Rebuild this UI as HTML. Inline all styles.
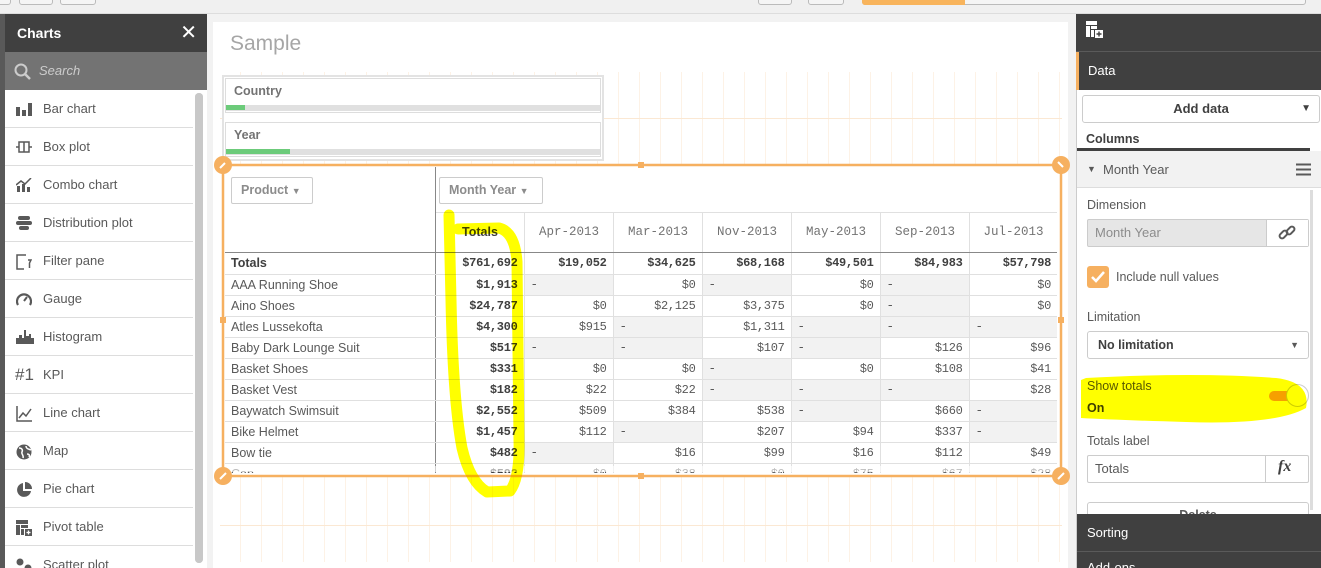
<!DOCTYPE html>
<html style="overflow:hidden;width:1321px;height:568px"><head><meta charset="utf-8">
<style>
*{box-sizing:border-box;margin:0;padding:0}
body{width:1321px;height:568px;overflow:hidden;background:#f2f2f2;font-family:"Liberation Sans",sans-serif;position:relative;color:#595959}
.a{position:absolute}
.topbtn{position:absolute;top:-4px;height:9px;border:1px solid #bbb;border-radius:3px;background:#f5f5f5}
.li{position:absolute;left:5px;width:188px;height:38px;border-bottom:1px solid #ddd;background:#fff;font-size:13px;color:#595959;line-height:38px;padding-left:38px}
.li i{position:absolute;left:11px;top:12px;width:16px;height:14px;font-style:normal;line-height:0;display:block}
.li i svg{display:block}
table{border-collapse:collapse;table-layout:fixed}
td{height:21px;font-size:12.5px;padding:0 6px;border-bottom:1px solid #e0e0e0;border-left:1px solid #e0e0e0;white-space:nowrap;overflow:hidden}
td.n{font-family:"Liberation Mono",monospace;text-align:right;font-size:12px;letter-spacing:-0.3px}
td.g{background:#f2f2f2;text-align:left;font-family:"Liberation Mono",monospace}
td.p{border-left:none;color:#595959}
td.t{font-weight:bold;border-left:1px solid #888;color:#404040}
.lab{font-size:12.5px;color:#595959}
</style></head><body>
<div class="a" style="left:0;top:0;width:1321px;height:14px;background:#f0f0f0;border-bottom:1px solid #ddd"></div>
<div class="topbtn" style="left:-5px;width:16px"></div>
<div class="topbtn" style="left:19px;width:34px"></div>
<div class="topbtn" style="left:60px;width:36px"></div>
<div class="topbtn" style="left:758px;width:34px"></div>
<div class="topbtn" style="left:808px;width:36px"></div>
<div class="topbtn" style="left:862px;width:444px;background:#f5f5f5"></div>
<div class="a" style="left:862px;top:0;width:103px;height:5px;background:#f8b45c;border-radius:0 0 0 3px"></div>

<div class="a" style="left:0;top:14px;width:5px;height:554px;background:#595959"></div>
<div class="a" style="left:5px;top:14px;width:202px;height:38px;background:#404040;color:#fff;font-weight:bold;font-size:14px;line-height:38px;padding-left:12px">Charts<span style="position:absolute;right:10px;font-weight:normal;font-size:20px">✕</span></div>
<div class="a" style="left:5px;top:52px;width:202px;height:38px;background:#737373;color:#ccc;font-style:italic;font-size:13px;line-height:38px;padding-left:34px">Search
<svg class="a" style="left:9px;top:11px" width="18" height="18" viewBox="0 0 18 18"><circle cx="7" cy="7" r="5.5" fill="none" stroke="#ccc" stroke-width="2"/><path d="M11 11l5 5" stroke="#ccc" stroke-width="2.5"/></svg></div>
<div class="a" style="left:5px;top:90px;width:202px;height:478px;background:#fff;overflow:hidden">
<div class="a" style="left:190px;top:3px;width:8px;height:470px;background:#c8c8c8;border-radius:4px"></div>
</div>
<div class="a" style="left:0;top:90px;width:207px;height:478px;overflow:hidden">
<div class="li" style="top:0px"><i><svg width="16" height="14"><rect x="0" y="5" width="4" height="9" fill="#595959"/><rect x="6" y="8" width="4" height="6" fill="#595959"/><rect x="12" y="1" width="4" height="13" fill="#595959"/></svg></i>Bar chart</div>
<div class="li" style="top:38px"><i><svg width="16" height="14"><path d="M0 7h3M13 7h3M3 2h10v10H3zM8 2v10" stroke="#595959" fill="none" stroke-width="1.5"/></svg></i>Box plot</div>
<div class="li" style="top:76px"><i><svg width="16" height="14"><rect x="1" y="8" width="3" height="6" fill="#595959"/><rect x="6" y="6" width="3" height="8" fill="#595959"/><rect x="11" y="9" width="3" height="5" fill="#595959"/><path d="M0 7l5-4 4 3 6-6" stroke="#595959" fill="none" stroke-width="1.5"/></svg></i>Combo chart</div>
<div class="li" style="top:114px"><i><svg width="16" height="14"><rect x="2" y="0" width="12" height="4" rx="2" fill="#595959"/><rect x="0" y="5" width="16" height="4" rx="2" fill="#595959"/><rect x="3" y="10" width="10" height="4" rx="2" fill="#595959"/></svg></i>Distribution plot</div>
<div class="li" style="top:152px"><i><svg width="16" height="16"><path d="M10 1H1v14h7M12 6l3 0-1.5 3v5" stroke="#595959" fill="none" stroke-width="1.5"/></svg></i>Filter pane</div>
<div class="li" style="top:190px"><i><svg width="16" height="14"><path d="M2 13A7 7 0 1 1 14 13" stroke="#595959" fill="none" stroke-width="2.2"/><path d="M8 9l3-4" stroke="#595959" stroke-width="2"/></svg></i>Gauge</div>
<div class="li" style="top:228px"><i><svg width="18" height="14"><path d="M0 14V8h3V5h3v3h2V0h2v6h3V4h2v4h3v6z" fill="#595959"/></svg></i>Histogram</div>
<div class="li" style="top:266px"><i style="top:10px;font-size:17px;line-height:18px;color:#595959;left:10px">#1</i>KPI</div>
<div class="li" style="top:304px"><i><svg width="16" height="16"><path d="M1 0v15h15M3 12l4-5 3 3 5-7" stroke="#595959" fill="none" stroke-width="1.5"/></svg></i>Line chart</div>
<div class="li" style="top:342px"><i><svg width="16" height="16"><circle cx="8" cy="8" r="7.5" fill="#595959"/><path d="M3 4c3 0 4 2 3 4s2 3 1 6M10 2c0 3 3 3 5 4M11 10c2 0 3 1 2 3" stroke="#fff" fill="none" stroke-width="1.5"/></svg></i>Map</div>
<div class="li" style="top:380px"><i><svg width="16" height="16"><path d="M7 1A7 7 0 1 0 15 9H7z" fill="#595959"/><path d="M9 0v7h7A7 7 0 0 0 9 0z" fill="#595959"/></svg></i>Pie chart</div>
<div class="li" style="top:418px"><i><svg width="16" height="16"><path d="M0 0h12v4H0zM0 5h4v10H0zM5 5h7v3H5zM5 9h3v6H5z" fill="#595959"/><rect x="9" y="9" width="7" height="7" fill="#595959"/><path d="M12.5 10.5v4M10.5 12.5h4" stroke="#fff" stroke-width="1.3"/></svg></i>Pivot table</div>
<div class="li" style="top:456px"><i><svg width="16" height="14"><circle cx="4" cy="4" r="3.5" fill="#595959"/><circle cx="12" cy="10" r="3.5" fill="#595959"/></svg></i>Scatter plot</div>
</div>
<div class="a" style="left:195px;top:93px;width:8px;height:470px;background:#c8c8c8;border-radius:4px"></div>

<div class="a" style="left:213px;top:22px;width:855px;height:546px;background:#fff"></div>
<div class="a" style="left:220px;top:72px;width:842px;height:490px;background-image:repeating-linear-gradient(90deg,transparent 0 20px,#fdf2e6 20px 21px)"></div>
<div class="a" style="left:220px;top:118px;width:842px;height:1px;background:#fbe8d3"></div>
<div class="a" style="left:220px;top:525px;width:842px;height:1px;background:#fbe8d3"></div>
<div class="a" style="left:230px;top:32px;font-size:21px;color:#a6a6a6">Sample</div>

<div class="a" style="left:222px;top:75px;width:382px;height:86px;background:#fff;border:2px solid #e3e3e3"></div>
<div class="a" style="left:225px;top:78px;width:376px;height:35px;border:1px solid #ddd;background:#fff"></div>
<div class="a" style="left:234px;top:84px;font-size:12.5px;font-weight:bold;color:#737373">Country</div>
<div class="a" style="left:226px;top:105px;width:374px;height:6px;background:#e0e0e0"></div>
<div class="a" style="left:226px;top:105px;width:19px;height:5px;background:#6ccb7a"></div>
<div class="a" style="left:225px;top:122px;width:376px;height:35px;border:1px solid #ddd;background:#fff"></div>
<div class="a" style="left:234px;top:128px;font-size:12.5px;font-weight:bold;color:#737373">Year</div>
<div class="a" style="left:226px;top:149px;width:374px;height:6px;background:#e0e0e0"></div>
<div class="a" style="left:226px;top:149px;width:64px;height:5px;background:#6ccb7a"></div>

<div class="a" style="left:224px;top:165px;width:837px;height:311px;background:#fff"></div>
<div class="a" style="left:435px;top:167px;width:1px;height:306px;background:#888"></div>
<div class="a" style="left:231px;top:177px;width:82px;height:27px;border:1px solid #ccc;border-radius:2px;font-size:12.5px;font-weight:bold;color:#8c8c8c;line-height:25px;padding-left:9px">Product <span style="font-size:9px">▼</span></div>
<div class="a" style="left:439px;top:177px;width:104px;height:27px;border:1px solid #ccc;border-radius:2px;font-size:12.5px;font-weight:bold;color:#8c8c8c;line-height:25px;padding-left:9px">Month Year <span style="font-size:9px">▼</span></div>
<div class="a" style="left:436px;top:212px;width:621px;height:1px;background:#e0e0e0"></div>
<div class="a" style="left:225px;top:252px;width:832px;height:1px;background:#888"></div>
<div class="a" style="left:436px;top:225px;width:88px;text-align:center;font-size:12.5px;font-weight:bold;color:#404040">Totals</div>
<div class="a" style="left:524px;top:213px;width:533px;height:39px;font-family:'Liberation Mono',monospace;font-size:12.5px;color:#737373;line-height:39px">
<span class="a" style="left:0;width:89px;text-align:center;border-left:1px solid #e0e0e0;height:39px">Apr-2013</span>
<span class="a" style="left:89px;width:89px;text-align:center;border-left:1px solid #e0e0e0;height:39px">Mar-2013</span>
<span class="a" style="left:178px;width:89px;text-align:center;border-left:1px solid #e0e0e0;height:39px">Nov-2013</span>
<span class="a" style="left:267px;width:89px;text-align:center;border-left:1px solid #e0e0e0;height:39px">May-2013</span>
<span class="a" style="left:356px;width:89px;text-align:center;border-left:1px solid #e0e0e0;height:39px">Sep-2013</span>
<span class="a" style="left:445px;width:88px;text-align:center;border-left:1px solid #e0e0e0;height:39px">Jul-2013</span>
</div>
<div class="a" style="left:225px;top:253px;width:832px;height:220px;overflow:hidden">
<table style="width:832px">
<colgroup><col style="width:210px"><col style="width:89px"><col style="width:89px"><col style="width:89px"><col style="width:89px"><col style="width:89px"><col style="width:89px"><col style="width:88px"></colgroup>
<tr style="font-weight:bold;color:#404040"><td class="p" style="font-weight:bold;color:#404040">Totals</td><td class="n t">$761,692</td><td class="n">$19,052</td><td class="n">$34,625</td><td class="n">$68,168</td><td class="n">$49,501</td><td class="n">$84,983</td><td class="n">$57,798</td></tr>
<tr><td class="p">AAA Running Shoe</td><td class="n t">$1,913</td><td class="g">-</td><td class="n">$0</td><td class="g">-</td><td class="n">$0</td><td class="g">-</td><td class="n">$0</td></tr>
<tr><td class="p">Aino Shoes</td><td class="n t">$24,787</td><td class="n">$0</td><td class="n">$2,125</td><td class="n">$3,375</td><td class="n">$0</td><td class="g">-</td><td class="n">$0</td></tr>
<tr><td class="p">Atles Lussekofta</td><td class="n t">$4,300</td><td class="n">$915</td><td class="g">-</td><td class="n">$1,311</td><td class="g">-</td><td class="g">-</td><td class="g">-</td></tr>
<tr><td class="p">Baby Dark Lounge Suit</td><td class="n t">$517</td><td class="g">-</td><td class="g">-</td><td class="n">$107</td><td class="g">-</td><td class="n">$126</td><td class="n">$96</td></tr>
<tr><td class="p">Basket Shoes</td><td class="n t">$331</td><td class="n">$0</td><td class="n">$0</td><td class="g">-</td><td class="n">$0</td><td class="n">$108</td><td class="n">$41</td></tr>
<tr><td class="p">Basket Vest</td><td class="n t">$182</td><td class="n">$22</td><td class="n">$22</td><td class="g">-</td><td class="g">-</td><td class="g">-</td><td class="n">$28</td></tr>
<tr><td class="p">Baywatch Swimsuit</td><td class="n t">$2,552</td><td class="n">$509</td><td class="n">$384</td><td class="n">$538</td><td class="g">-</td><td class="n">$660</td><td class="g">-</td></tr>
<tr><td class="p">Bike Helmet</td><td class="n t">$1,457</td><td class="n">$112</td><td class="g">-</td><td class="n">$207</td><td class="n">$94</td><td class="n">$337</td><td class="g">-</td></tr>
<tr><td class="p">Bow tie</td><td class="n t">$482</td><td class="g">-</td><td class="n">$16</td><td class="n">$99</td><td class="n">$16</td><td class="n">$112</td><td class="n">$49</td></tr>
<tr><td class="p">Cap</td><td class="n t">$592</td><td class="n">$0</td><td class="n">$38</td><td class="n">$0</td><td class="n">$75</td><td class="n">$67</td><td class="n">$28</td></tr>
</table></div>
<div class="a" style="left:224px;top:466px;width:837px;height:6px;background:rgba(255,255,255,.6)"></div>

<svg class="a" style="left:210px;top:150px" width="864" height="340">
<g stroke="#f6b060" stroke-width="2.5" fill="none"><rect x="13" y="15" width="838" height="311"/></g>
<g fill="#f6b060"><rect x="428" y="12" width="6" height="6"/><rect x="428" y="323" width="6" height="6"/><rect x="10" y="167" width="6" height="6"/><rect x="848" y="167" width="6" height="6"/>
<circle cx="13" cy="15" r="9"/><circle cx="851" cy="15" r="9"/><circle cx="13" cy="326" r="9"/><circle cx="851" cy="326" r="9"/></g>
<g stroke="#fff" stroke-width="2"><path d="M10 18l5-5M848 12l5 5M10 329l6-6M848 329l6-6"/></g>
</svg>

<svg class="a" style="left:0;top:0;mix-blend-mode:multiply" width="1321" height="568">
<path d="M449 215 L451 300 Q453 400 462 448 Q470 482 487 492 L510 491 Q520 478 519 440 L517 262 Q515 232 499 228 L458 229" stroke="#ffff00" stroke-width="11" fill="none" stroke-linejoin="round" stroke-linecap="round"/>
</svg>

<div class="a" style="left:1076px;top:14px;width:245px;height:554px;background:#fff;border-left:1px solid #ccc"></div>
<div class="a" style="left:1310px;top:190px;width:3px;height:320px;background:#ddd"></div>
<div class="a" style="left:1076px;top:14px;width:245px;height:38px;background:#404040;border-bottom:1px solid #5a5a5a"></div>
<svg class="a" style="left:1086px;top:21px" width="18" height="18"><path d="M0 0h11v4H0zM0 5h4v11H0zM5 5h6v3H5zM5 9h3v7H5z" fill="#fff"/><rect x="9" y="9" width="8" height="8" fill="#fff"/><path d="M13 10.5v5M10.5 13h5" stroke="#404040" stroke-width="1.4"/></svg>
<div class="a" style="left:1076px;top:52px;width:245px;height:38px;background:#404040;border-left:3px solid #f6b060;color:#fff;font-size:13px;line-height:38px;padding-left:9px">Data</div>
<div class="a" style="left:1082px;top:95px;width:238px;height:28px;border:1px solid #ccc;border-radius:3px;font-size:13px;font-weight:bold;color:#404040;text-align:center;line-height:26px">Add data<span style="position:absolute;right:8px;font-size:10px">▼</span></div>
<div class="a" style="left:1086px;top:132px;font-size:12.5px;font-weight:bold;color:#404040">Columns</div>
<div class="a" style="left:1077px;top:148px;width:233px;height:3px;background:#404040"></div>
<div class="a" style="left:1077px;top:151px;width:244px;height:37px;background:#f2f2f2;border-bottom:1px solid #ddd;font-size:13px;color:#595959;line-height:37px;padding-left:26px">Month Year<span style="position:absolute;left:10px;font-size:9px">▼</span>
<svg class="a" style="left:219px;top:12px" width="15" height="13"><path d="M0 1.5h15M0 6.5h15M0 11.5h15" stroke="#595959" stroke-width="2"/></svg></div>
<div class="a lab" style="left:1087px;top:198px">Dimension</div>
<div class="a" style="left:1087px;top:219px;width:222px;height:28px;border:1px solid #ccc;border-radius:2px;background:#e6e6e6;font-size:13px;color:#8c8c8c;line-height:26px;padding-left:7px">Month Year</div>
<div class="a" style="left:1266px;top:220px;width:42px;height:26px;background:#fff;border-left:1px solid #ccc"></div>
<svg class="a" style="left:1278px;top:224px" width="18" height="18"><g stroke="#595959" stroke-width="2" fill="none"><rect x="1" y="8" width="9" height="5" rx="2.5" transform="rotate(-45 5.5 10.5)"/><rect x="8" y="4" width="9" height="5" rx="2.5" transform="rotate(-45 12.5 6.5)"/></g></svg>
<div class="a" style="left:1087px;top:266px;width:22px;height:22px;background:#f6b060;border-radius:3px"></div>
<svg class="a" style="left:1090px;top:269px" width="16" height="16"><path d="M2 8l4 4 8-9" stroke="#fff" stroke-width="2.5" fill="none"/></svg>
<div class="a" style="left:1116px;top:270px;font-size:12.5px;color:#595959">Include null values</div>
<div class="a lab" style="left:1087px;top:310px">Limitation</div>
<div class="a" style="left:1087px;top:331px;width:222px;height:28px;border:1px solid #ccc;border-radius:3px;font-size:12.5px;font-weight:bold;color:#404040;line-height:26px;padding-left:10px">No limitation<span style="position:absolute;right:9px;font-size:9px;color:#595959">▼</span></div>
<div class="a" style="left:1087px;top:379px;font-size:12.5px;color:#595959">Show totals</div>
<div class="a" style="left:1087px;top:401px;font-size:12.5px;font-weight:bold;color:#404040">On</div>
<div class="a" style="left:1269px;top:391px;width:30px;height:10px;border-radius:5px;background:#f6a010"></div>
<div class="a" style="left:1286px;top:384px;width:23px;height:23px;border-radius:50%;background:#fff;border:1px solid #ccc"></div>
<svg class="a" style="left:1076px;top:370px;mix-blend-mode:multiply" width="245" height="60"><path d="M10 8 Q120 2 200 8 Q235 12 230 38 Q200 55 110 52 Q40 50 5 48 L5 10z" fill="#ffff00"/></svg>
<div class="a lab" style="left:1087px;top:434px">Totals label</div>
<div class="a" style="left:1087px;top:455px;width:222px;height:28px;border:1px solid #ccc;border-radius:2px;font-size:13px;color:#595959;line-height:26px;padding-left:7px">Totals</div>
<div class="a" style="left:1265px;top:456px;width:1px;height:26px;background:#ccc"></div>
<div class="a" style="left:1278px;top:458px;font-family:'Liberation Serif',serif;font-style:italic;font-weight:bold;font-size:16px;color:#404040">fx</div>
<div class="a" style="left:1087px;top:502px;width:222px;height:22px;border:1px solid #ccc;border-radius:3px;font-size:12.5px;font-weight:bold;color:#595959;text-align:center;line-height:24px;overflow:hidden">Delete</div>
<div class="a" style="left:1077px;top:514px;width:244px;height:54px;background:#404040"></div>
<div class="a" style="left:1077px;top:551px;width:244px;height:1px;background:#5a5a5a"></div>
<div class="a" style="left:1087px;top:525px;font-size:13px;color:#fff">Sorting</div>
<div class="a" style="left:1087px;top:560px;font-size:13px;color:#fff">Add-ons</div>
</body></html>
